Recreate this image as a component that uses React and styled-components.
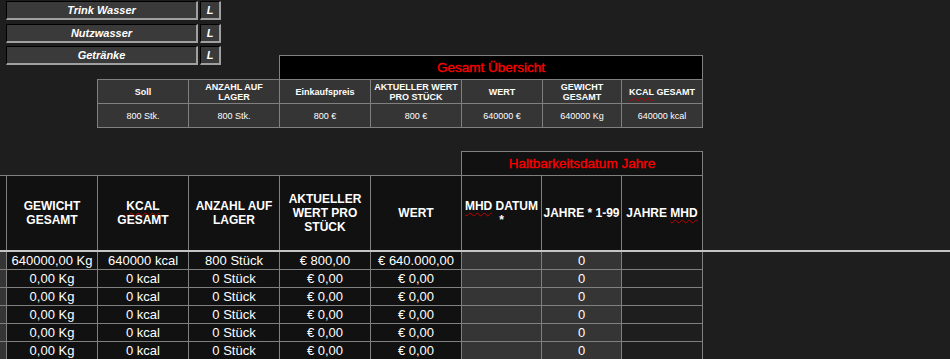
import React from "react";
import styled, { createGlobalStyle } from "styled-components";

const GlobalStyle = createGlobalStyle`
  html, body {
    margin: 0;
    padding: 0;
    background: #1e1e1e;
  }
  body {
    font-family: "Liberation Sans", Arial, sans-serif;
    color: #fff;
    overflow: hidden;
  }
  * {
    box-sizing: border-box;
  }
`;

const GRID = "#808080";
const COLS = "6px repeat(5, 91px) 80px 80px 82px";

const Sheet = styled.div`
  width: 950px;
  height: 359px;
  overflow: hidden;
  background: #1e1e1e;
`;

const TopArea = styled.div`
  display: grid;
  & > * {
    grid-area: 1 / 1;
  }
`;

const ButtonStack = styled.div`
  display: flex;
  flex-direction: column;
  gap: 3.5px;
  padding: 1px 0 0 6px;
  align-self: start;
  justify-self: start;
  z-index: 1;
`;

const ButtonRow = styled.div`
  display: flex;
  gap: 2px;
`;

const SheetButton = styled.button`
  width: ${({ $w }) => $w}px;
  height: 19px;
  padding: 0;
  background: #3a3a3a;
  border: 0;
  border-top: 1px solid #000;
  border-left: 1px solid #000;
  border-right: 2px solid #a0a0a0;
  border-bottom: 2px solid #a0a0a0;
  color: #fff;
  font: italic bold 11px "Liberation Sans", Arial, sans-serif;
  display: flex;
  align-items: center;
  justify-content: center;
  cursor: pointer;
`;

const Summary = styled.div`
  padding: 55px 0 0 97px;
  align-self: start;
`;

const RedTitle = styled.div`
  height: 24px;
  border: 1px solid ${GRID};
  border-bottom: 0;
  color: #ff0000;
  font-size: ${({ $size }) => $size}px;
  -webkit-text-stroke: 0.3px #ff0000;
  display: flex;
  align-items: center;
  justify-content: center;
`;

const SummaryTitle = styled(RedTitle)`
  margin-left: 182px;
  width: 424px;
  background: #000;
`;

const SummaryGrid = styled.div`
  display: grid;
  grid-template-columns: 91px 91px 91px 91px 81px 79px 82px;
  grid-auto-rows: 24px;
  width: 606px;
  border-bottom: 1px solid ${GRID};
`;

const SummaryCell = styled.div`
  background: #353535;
  border-top: 1px solid ${GRID};
  border-left: 1px solid ${GRID};
  &:nth-child(7n) {
    border-right: 1px solid ${GRID};
  }
  font-size: 9px;
  line-height: 10px;
  font-weight: ${({ $head }) => ($head ? "bold" : "normal")};
  text-align: center;
  display: flex;
  align-items: center;
  justify-content: center;
`;

const Main = styled.div`
  margin-top: 23px;
`;

const MhdTitle = styled(RedTitle)`
  margin-left: 461px;
  width: 242px;
  background: #111;
`;

const HeaderBand = styled.div`
  border-bottom: 2px solid #c4c4c4;
`;

const Row = styled.div`
  display: grid;
  grid-template-columns: ${COLS};
  width: 703px;
`;

const HeaderRow = styled(Row)`
  grid-auto-rows: 74px;
  border-top: 1px solid ${GRID};
`;

const HeadCell = styled.div`
  background: #111;
  border-left: ${({ $first }) => ($first ? "0" : `1px solid ${GRID}`)};
  &:last-child {
    border-right: 1px solid ${GRID};
  }
  font-size: 12px;
  line-height: 14px;
  font-weight: bold;
  text-align: center;
  display: flex;
  align-items: center;
  justify-content: center;
  white-space: nowrap;
`;

const DataRow = styled(Row)`
  grid-auto-rows: 18px;
`;

const tones = {
  dark: "#111111",
  mid: "#353535",
  bg: "#1e1e1e",
};

const DataCell = styled.div`
  background: ${({ $tone }) => tones[$tone]};
  border-bottom: 1px solid ${GRID};
  border-left: ${({ $first }) => ($first ? "0" : `1px solid ${GRID}`)};
  &:last-child {
    border-right: 1px solid ${GRID};
  }
  font-size: 13px;
  line-height: 17px;
  text-align: center;
  white-space: nowrap;
  overflow: visible;
`;

const Squiggle = styled.span`
  text-decoration: underline wavy #c00000;
  text-decoration-thickness: 1px;
  text-underline-offset: 2px;
`;

const buttons = ["Trink Wasser", "Nutzwasser", "Getränke"];

const summaryHead = [
  "Soll",
  <>ANZAHL AUF<br />LAGER</>,
  "Einkaufspreis",
  <>AKTUELLER WERT<br />PRO STÜCK</>,
  "WERT",
  <>GEWICHT<br />GESAMT</>,
  <><Squiggle>KCAL</Squiggle> GESAMT</>,
];

const summaryData = [
  "800 Stk.",
  "800 Stk.",
  "800 €",
  "800 €",
  "640000 €",
  "640000 Kg",
  "640000 kcal",
];

const mainHead = [
  "",
  <>GEWICHT<br />GESAMT</>,
  <><Squiggle>KCAL</Squiggle><br />GESAMT</>,
  <>ANZAHL AUF<br />LAGER</>,
  <>AKTUELLER<br />WERT PRO<br />STÜCK</>,
  "WERT",
  <><Squiggle>MHD</Squiggle> DATUM<br />*</>,
  "JAHRE * 1-99",
  <>JAHRE <Squiggle>MHD</Squiggle></>,
];

const columnTones = ["mid", "dark", "dark", "dark", "dark", "dark", "mid", "mid", "bg"];

const rows = [
  ["", "640000,00 Kg", "640000 kcal", "800 Stück", "€ 800,00", "€ 640.000,00", "", "0", ""],
  ...Array.from({ length: 6 }, () => [
    "",
    "0,00 Kg",
    "0 kcal",
    "0 Stück",
    "€ 0,00",
    "€ 0,00",
    "",
    "0",
    "",
  ]),
];

export default function App() {
  return (
    <Sheet>
      <GlobalStyle />
      <TopArea>
        <ButtonStack>
          {buttons.map((label) => (
            <ButtonRow key={label}>
              <SheetButton $w={192}>{label}</SheetButton>
              <SheetButton $w={21}>L</SheetButton>
            </ButtonRow>
          ))}
        </ButtonStack>
        <Summary>
          <SummaryTitle $size={13.5}>Gesamt Übersicht</SummaryTitle>
          <SummaryGrid>
            {summaryHead.map((text, i) => (
              <SummaryCell key={`h${i}`} $head>
                <div>{text}</div>
              </SummaryCell>
            ))}
            {summaryData.map((text, i) => (
              <SummaryCell key={`d${i}`}>
                <div>{text}</div>
              </SummaryCell>
            ))}
          </SummaryGrid>
        </Summary>
      </TopArea>

      <Main>
        <MhdTitle $size={13.5}>Haltbarkeitsdatum Jahre</MhdTitle>
        <HeaderBand>
          <HeaderRow>
            {mainHead.map((text, i) => (
              <HeadCell key={i} $first={i === 0}>
                <div>{text}</div>
              </HeadCell>
            ))}
          </HeaderRow>
        </HeaderBand>
        {rows.map((row, r) => (
          <DataRow key={r}>
            {row.map((value, c) => (
              <DataCell key={c} $first={c === 0} $tone={columnTones[c]}>
                {value}
              </DataCell>
            ))}
          </DataRow>
        ))}
      </Main>
    </Sheet>
  );
}
